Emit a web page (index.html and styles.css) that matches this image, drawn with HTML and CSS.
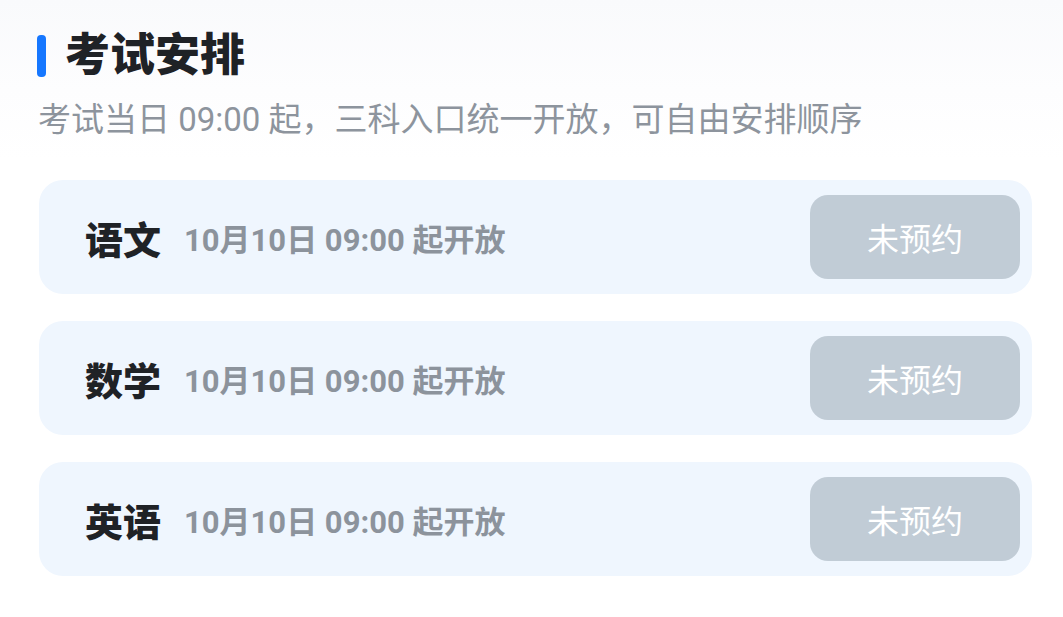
FILE: index.html
```html
<!DOCTYPE html>
<html lang="zh-CN">
<head>
    <meta charset="UTF-8">
    <meta name="viewport" content="width=device-width, initial-scale=1.0">
    <title>考试安排</title>
    <link rel="stylesheet" href="styles.css">
</head>
<body>
    <div class="page">
        <!-- Header -->
        <div class="title-row">
            <span class="title-bar"></span>
            <h1 class="title">考试安排</h1>
        </div>
        <p class="subtitle">考试当日 09:00 起，三科入口统一开放，可自由安排顺序</p>

        <!-- Exam list -->
        <div class="exam-list">
            <div class="exam-card">
                <div class="exam-info">
                    <span class="exam-name">语文</span>
                    <span class="exam-time">10月10日 09:00 起开放</span>
                </div>
                <button class="exam-btn">未预约</button>
            </div>
            <div class="exam-card">
                <div class="exam-info">
                    <span class="exam-name">数学</span>
                    <span class="exam-time">10月10日 09:00 起开放</span>
                </div>
                <button class="exam-btn">未预约</button>
            </div>
            <div class="exam-card">
                <div class="exam-info">
                    <span class="exam-name">英语</span>
                    <span class="exam-time">10月10日 09:00 起开放</span>
                </div>
                <button class="exam-btn">未预约</button>
            </div>
        </div>
    </div>
</body>
</html>
```

FILE: styles.css
```css
/* General Styles */
body {
    margin: 0;
    background: linear-gradient(180deg, #f9fafc 0px, #fdfdfe 90px, #ffffff 160px);
    font-family: Roboto, "Noto Sans CJK SC", sans-serif;
    height: 100vh;
    overflow: hidden;
}

.page {
    padding: 30px 31px 0 37px;
}

/* Header */
.title-row {
    display: flex;
    align-items: center;
    gap: 19px;
}

.title-bar {
    width: 9px;
    height: 42px;
    background-color: #1677ff;
    border-radius: 4px;
}

.title {
    margin: 0;
    font-size: 45px;
    font-weight: 900;
    line-height: 52px;
    color: #1f2226;
}

.subtitle {
    margin: 18px 0 0 1px;
    font-size: 33px;
    line-height: 40px;
    color: #8d949d;
}

/* Exam Cards */
.exam-list {
    margin: 40px 0 0 2px;
    display: flex;
    flex-direction: column;
    gap: 27px;
}

.exam-card {
    height: 114px;
    box-sizing: border-box;
    padding: 0 12px 0 46px;
    background-color: #eff6fe;
    border-radius: 24px;
    display: flex;
    align-items: center;
    justify-content: space-between;
}

.exam-info {
    display: flex;
    align-items: center;
    gap: 23px;
}

.exam-name {
    font-size: 38px;
    font-weight: 900;
    color: #1f2226;
}

.exam-time {
    font-size: 31px;
    font-weight: 700;
    color: #8c939c;
}

.exam-btn {
    width: 210px;
    height: 84px;
    border: none;
    border-radius: 18px;
    background-color: #c1ccd6;
    color: #ffffff;
    font-family: inherit;
    font-size: 32px;
}
```
